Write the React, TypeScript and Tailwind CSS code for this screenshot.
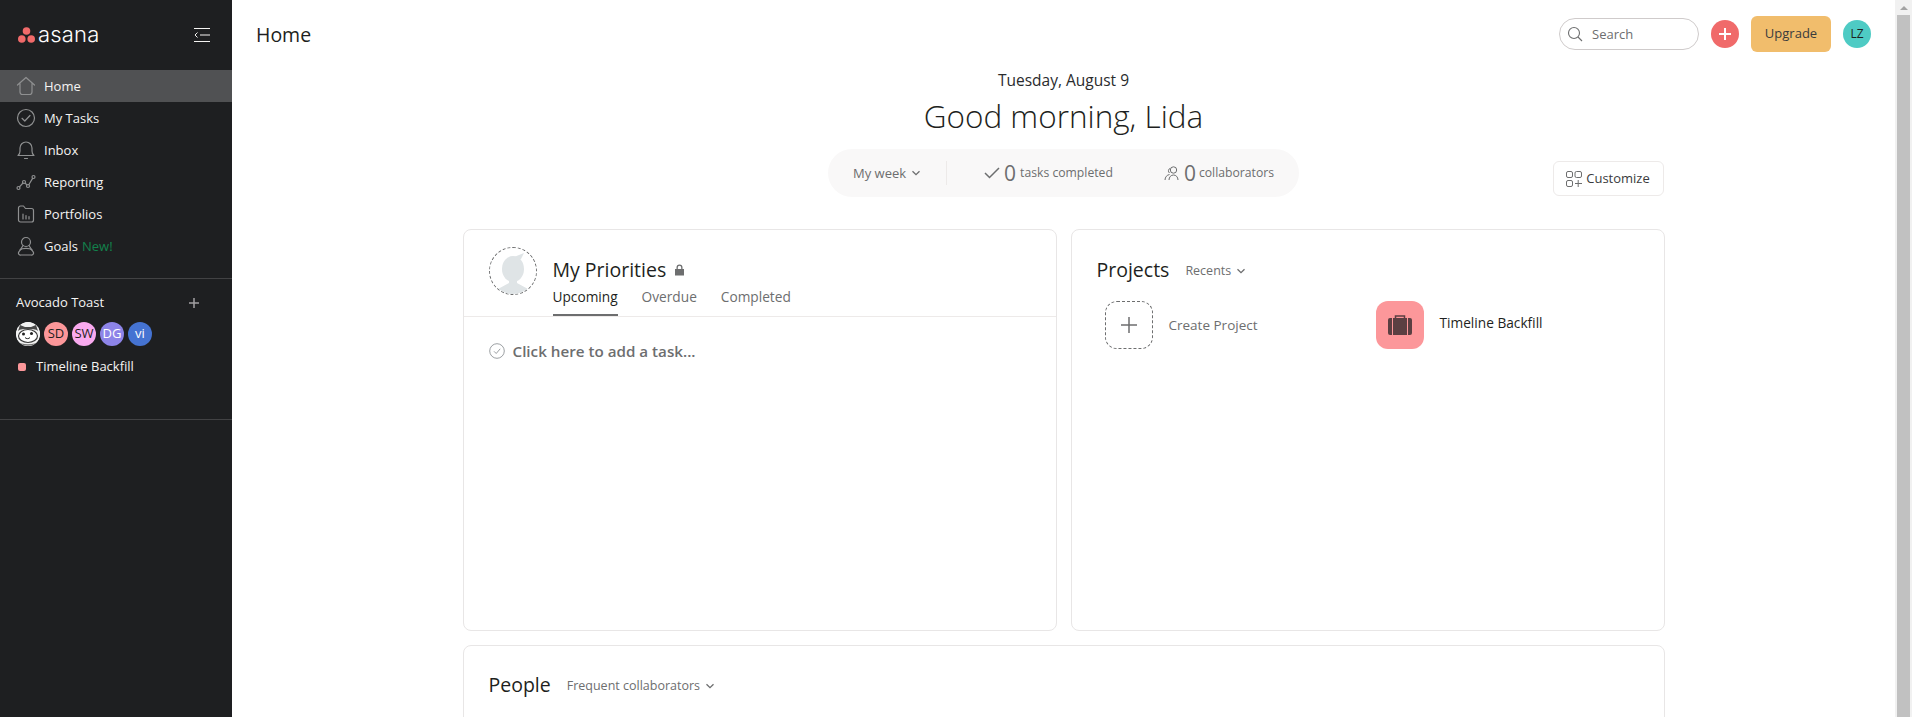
import React from "react";

const font = { fontFamily: '"Open Sans", "Noto Sans", sans-serif' };

function NavIcon({ name }: { name: string }) {
  const c = { fill: "none", stroke: "#8f9091", strokeWidth: 1.2, strokeLinecap: "round" as const, strokeLinejoin: "round" as const };
  return (
    <svg width="20" height="20" viewBox="0 0 20 20" {...c} className="shrink-0">
      {name === "Home" && <path d="M1.500 9 10 1.500 18.500 9M4 7.500v8.500a2.500 2.500 0 0 0 2.500 2.500h7a2.500 2.500 0 0 0 2.500-2.500V7.500" />}
      {name === "My Tasks" && (<><circle cx="10" cy="10" r="8.500" /><path d="M6 10.300l2.800 2.700L14 7.500" /></>)}
      {name === "Inbox" && <path d="M2 15.500c1.500-1 2-2.500 2-4.500V8a6 6 0 0 1 12 0v3c0 2 .5 3.500 2 4.500ZM8.500 18.500h3" />}
      {name === "Reporting" && (<><circle cx="2.500" cy="16" r="1.500" /><circle cx="8" cy="10" r="1.500" /><circle cx="12" cy="14" r="1.500" /><circle cx="17.500" cy="5" r="1.500" /><path d="M3.500 14.800 7 11M9 11.300l2 1.500M12.800 12.700l3.800-6.300" /></>)}
      {name === "Portfolios" && (<><path d="M2.500 4a2 2 0 0 1 2-2h3l2 2.500h6a2 2 0 0 1 2 2v9.500a2 2 0 0 1-2 2h-11a2 2 0 0 1-2-2Z" /><path d="M7 10v5M10 11.500v3.500M13 12.500V15" strokeWidth="1.200" /></>)}
      {name === "Goals" && (<><circle cx="10" cy="6" r="4.500" /><path d="M7 9.500 3.200 15.500a2 2 0 0 0 1.700 3.500h10.200a2 2 0 0 0 1.700-3.500L13 9.500" /><path d="M4 14c2-2.200 10-2.200 12 0" /></>)}
    </svg>
  );
}

const nav = ["Home", "My Tasks", "Inbox", "Reporting", "Portfolios", "Goals"];

function Chevron({ className = "" }: { className?: string }) {
  return (
    <svg width="10" height="10" viewBox="0 0 10 10" fill="none" stroke="currentColor" strokeWidth="1.300" className={className}>
      <path d="M1.500 3.200 5 6.700l3.500-3.500" />
    </svg>
  );
}

function Sidebar() {
  return (
    <aside className="w-[232px] shrink-0 h-full bg-[#1e1f21] text-[#f5f4f3] flex flex-col">
      <div className="h-[70px] flex items-center justify-between pl-[18px] pr-[22px] shrink-0">
        <div className="flex items-center gap-[3px]">
          <svg width="17" height="16" viewBox="0 0 17 16" fill="#f06a6a">
            <circle cx="8.500" cy="4" r="3.800" />
            <circle cx="3.800" cy="12" r="3.800" />
            <circle cx="13.200" cy="12" r="3.800" />
          </svg>
          <span style={{ fontFamily: "Inter, sans-serif" }} className="text-[22px] leading-none font-light text-white -mt-[3px] tracking-[0.2px]">asana</span>
        </div>
        <svg width="16" height="14" viewBox="0 0 16 14" fill="none" stroke="#f5f4f3" strokeWidth="1">
          <path d="M0 .5h16M6 7h10M0 13.500h16M3.500 4.500 1 7l2.500 2.500" />
        </svg>
      </div>
      <nav className="flex flex-col">
        {nav.map((n, i) => (
          <div key={n} className={`h-[32px] flex items-center pl-[16px] gap-[8px] text-[13px] ${i === 0 ? "bg-[#505153]" : ""}`}>
            <NavIcon name={n} />
            <span className="mt-[1px]">{n}</span>
            {n === "Goals" && <span className="text-[#12824c] -ml-[4px] mt-[1px]">New!</span>}
          </div>
        ))}
      </nav>
      <div className="mt-[16px] border-t border-[#424244]" />
      <div className="pl-[16px] pr-[32px] pt-[11px] flex items-center justify-between text-[13px] h-[36px]">
        <span>Avocado Toast</span>
        <svg width="12" height="12" viewBox="0 0 12 12" stroke="#a2a0a2" strokeWidth="1.500"><path d="M6 1v10M1 6h10" /></svg>
      </div>
      <div className="flex gap-[4px] pl-[16px] pt-[7px] text-[13px]">
        <div className="w-[24px] h-[24px] rounded-full bg-white overflow-hidden">
          <svg width="24" height="24" viewBox="0 0 24 24">
            <circle cx="12" cy="12" r="12" fill="#f2f2f2" />
            <path d="M2 9 4 3l5 2h6l5-2 2 6c-2-2-6-2-10-2S4 7 2 9Z" fill="#4a4a4a" />
            <ellipse cx="12" cy="14" rx="9.500" ry="6.500" fill="#fff" stroke="#3a3a3a" strokeWidth="1.200" />
            <circle cx="7.500" cy="12" r="1.500" fill="#222" />
            <circle cx="15.500" cy="11.500" r="1.500" fill="#222" />
            <path d="M9 15.500c1 1.500 4 1.500 5 0" stroke="#222" fill="none" />
            <path d="M1 20c4 4 18 4 22 0" stroke="#777" strokeWidth="1.500" fill="none" />
          </svg>
        </div>
        <div className="w-[24px] h-[24px] rounded-full bg-[#fc979a] text-[#1e1f21] flex items-center justify-center">SD</div>
        <div className="w-[24px] h-[24px] rounded-full bg-[#f9aaef] text-[#1e1f21] flex items-center justify-center">SW</div>
        <div className="w-[24px] h-[24px] rounded-full bg-[#8d84e8] text-white flex items-center justify-center">DG</div>
        <div className="w-[24px] h-[24px] rounded-full bg-[#4573d2] text-white flex items-center justify-center">vi</div>
      </div>
      <div className="flex items-center pl-[18px] gap-[10px] text-[13px] h-[32px] mt-[5px]">
        <span className="w-[8px] h-[8px] rounded-[2px] bg-[#fc979a]" />
        <span>Timeline Backfill</span>
      </div>
      <div className="mt-[36px] border-t border-[#424244]" />
    </aside>
  );
}

function TopBar() {
  return (
    <header className="h-[72px] shrink-0 flex items-center justify-between pl-[24px] pr-[24px]">
      <h1 className="text-[19.500px] leading-none text-[#1e1f21] -mt-[2px]">Home</h1>
      <div className="flex items-center -mt-[4px]">
        <div className="w-[140px] h-[32px] rounded-full border border-[#cfcbcb] flex items-center pl-[7px] gap-[9px]">
          <svg width="16" height="16" viewBox="0 0 16 16" fill="none" stroke="#6d6e6f" strokeWidth="1.100">
            <circle cx="7" cy="7" r="5.500" /><path d="m11 11 4 4" />
          </svg>
          <span className="text-[13px] text-[#6d6e6f] mt-[1px]">Search</span>
        </div>
        <div className="w-[28px] h-[28px] rounded-full bg-[#f06a6a] ml-[12px] flex items-center justify-center">
          <svg width="12" height="12" viewBox="0 0 12 12" stroke="#fff" strokeWidth="2"><path d="M6 0v12M0 6h12" /></svg>
        </div>
        <div className="w-[80px] h-[36px] rounded-[6px] bg-[#f1bd6c] ml-[12px] flex items-center justify-center text-[13px] text-[#3a3b3d]">Upgrade</div>
        <div className="w-[28px] h-[28px] rounded-full bg-[#4ecbc4] ml-[12px] flex items-center justify-center text-[12px] text-[#1e1f21]">LZ</div>
      </div>
    </header>
  );
}

function Stats() {
  return (
    <div className="relative w-[1202px] mx-auto h-[48px] flex justify-center mt-[18px]">
      <div className="w-[471px] h-[48px] rounded-full bg-[#f9f8f8] flex items-center pl-[25px] text-[13px] text-[#6d6e6f]">
        <span className="mt-[1px]">My week</span>
        <Chevron className="ml-[5px]" />
        <span className="w-px h-[24px] bg-[#edeae9] ml-[25px]" />
        <svg width="16" height="14" viewBox="0 0 16 14" fill="none" stroke="#6d6e6f" strokeWidth="1.500" className="ml-[37px]"><path d="m1 7 4.500 4.500L15 2" /></svg>
        <span className="text-[21px] font-medium leading-none ml-[4px]">0</span>
        <span className="text-[12.200px] ml-[4px]">tasks completed</span>
        <svg width="17" height="15" viewBox="0 0 17 15" fill="none" stroke="#6d6e6f" strokeWidth="1" className="ml-[51px]">
          <circle cx="9.500" cy="4" r="3.200" /><path d="M1 14c0-3 2-5 4.500-5.500M6 2.500C4 3 4 6 5.500 7M5 14c0-3 2-5 4.500-5s4.500 2 4.500 5" />
        </svg>
        <span className="text-[21px] font-medium leading-none ml-[3px]">0</span>
        <span className="text-[12.200px] ml-[3px]">collaborators</span>
      </div>
      <div className="absolute right-[1px] top-[12px] w-[111px] h-[35px] rounded-[6px] border border-[#edeae9] flex items-center justify-center gap-[4px] text-[13px] text-[#3a3b3d]">
        <svg width="16" height="16" viewBox="0 0 16 16" fill="none" stroke="#6d6e6f" strokeWidth="1">
          <rect x=".5" y=".5" width="6" height="6" rx="1.500" /><rect x="9" y=".5" width="6.500" height="6" rx="1.500" /><rect x=".5" y="9.500" width="6" height="6" rx="1.500" /><path d="M12.200 9v7M9 12.500h7" />
        </svg>
        Customize
      </div>
    </div>
  );
}

function Priorities() {
  return (
    <section className="w-[594px] shrink-0 h-[402px] rounded-[8px] border border-[#e8e6e6] flex flex-col">
      <div className="h-[87px] border-b border-[#edeae9] flex pl-[25px]">
        <div className="w-[48px] h-[48px] mt-[17px] rounded-full border border-dashed border-[#6d6e6f] overflow-hidden shrink-0">
          <svg width="46" height="46" viewBox="0 0 46 46" fill="#dfe4e6">
            <ellipse cx="23" cy="21" rx="11" ry="13" />
            <path d="M16 12 24 9l10-4-3 6-8 5Z" />
            <path d="M19 30h8v5l11 6v5H8v-5l11-6Z" />
          </svg>
        </div>
        <div className="ml-[16px] flex flex-col">
          <div className="flex items-center mt-[26px] h-[28px] gap-[8px]">
            <span className="text-[19.500px] leading-none text-[#1e1f21]">My Priorities</span>
            <svg width="11" height="12" viewBox="0 0 11 12" fill="#6d6e6f"><path d="M1 5h1.500V3.500a3 3 0 0 1 6 0V5H10v6.500H1Zm2.800 0h3.400V3.500a1.700 1.700 0 0 0-3.400 0Z" /></svg>
          </div>
          <div className="flex gap-[24px] mt-[1px] text-[13.700px] text-[#6d6e6f]">
            <div className="h-[32px] flex items-center pb-[4px] border-b-2 border-[#6d6e6f] text-[#1e1f21]">Upcoming</div>
            <div className="h-[32px] flex items-center pb-[6px]">Overdue</div>
            <div className="h-[32px] flex items-center pb-[6px]">Completed</div>
          </div>
        </div>
      </div>
      <div className="flex items-center pl-[25px] gap-[8px] mt-[23px]">
        <svg width="16" height="16" viewBox="0 0 16 16" fill="none" stroke="#9ca0a3" strokeWidth="1">
          <circle cx="8" cy="8" r="7.300" /><path d="m5 8.300 2.200 2.200L11.200 5.800" />
        </svg>
        <span className="text-[15.200px] font-semibold text-[#6d6e6f]">Click here to add a task...</span>
      </div>
    </section>
  );
}

function Projects() {
  return (
    <section className="w-[594px] shrink-0 h-[402px] rounded-[8px] border border-[#e8e6e6] pl-[25px]">
      <div className="flex items-center mt-[26px] h-[28px] gap-[16px]">
        <span className="text-[19.500px] leading-none text-[#1e1f21]">Projects</span>
        <span className="flex items-center gap-[5px] text-[12.500px] text-[#6d6e6f] mt-[2px]">Recents <Chevron /></span>
      </div>
      <div className="flex mt-[17px] pl-[8px]">
        <div className="w-[271px] flex items-center">
          <div className="w-[48px] h-[48px] rounded-[12px] border border-dashed border-[#6d6e6f] flex items-center justify-center">
            <svg width="16" height="16" viewBox="0 0 16 16" stroke="#6d6e6f" strokeWidth="1.500"><path d="M8 0v16M0 8h16" /></svg>
          </div>
          <span className="ml-[16px] text-[13.500px] font-medium text-[#6d6e6f] mt-[1px]">Create Project</span>
        </div>
        <div className="flex items-center">
          <div className="w-[48px] h-[48px] rounded-[12px] bg-[#fc979a] flex items-center justify-center">
            <svg width="24" height="20" viewBox="0 0 24 20">
              <path d="M7.500 3V1h9v2" fill="none" stroke="#5a3f42" strokeWidth="1.500" />
              <rect y="3" width="24" height="17" rx="2" fill="#5a3f42" />
              <path d="M4.500 3v17M19.500 3v17" stroke="#fc979a" strokeWidth="1" />
            </svg>
          </div>
          <span className="ml-[16px] text-[13.700px] font-medium text-[#1e1f21] -mt-[3px]">Timeline Backfill</span>
        </div>
      </div>
    </section>
  );
}

function People() {
  return (
    <section className="w-[1202px] mx-auto mt-[14px] h-[200px] rounded-[8px] border border-[#e8e6e6] pl-[25px] pt-[25px] shrink-0">
      <div className="flex items-center h-[28px] gap-[16px]">
        <span className="text-[19.500px] leading-none text-[#1e1f21]">People</span>
        <span className="flex items-center gap-[5px] text-[12.500px] text-[#6d6e6f] mt-[2px]">Frequent collaborators <Chevron /></span>
      </div>
    </section>
  );
}

function Scrollbar() {
  return (
    <div className="w-[17px] shrink-0 h-full bg-[#f1f1f1] flex flex-col items-center">
      <div className="h-[15px] w-full flex items-center justify-center">
        <span className="w-0 h-0 border-x-[4px] border-x-transparent border-b-[4px] border-b-[#a3a3a3]" />
      </div>
      <div className="flex-1 w-[13px] bg-[#c1c1c1]" />
    </div>
  );
}

export default function App() {
  return (
    <div style={font} className="w-[1912px] h-[717px] flex overflow-hidden bg-white">
      <Sidebar />
      <main className="flex-1 h-full overflow-hidden flex flex-col">
        <TopBar />
        <div className="text-center text-[15.500px] leading-none font-medium text-[#2a2b2d] mt-[1px]">Tuesday, August 9</div>
        <div className="text-center text-[31.500px] leading-none font-light text-[#1e1f21] mt-[11px]">Good morning, Lida</div>
        <Stats />
        <div className="w-[1202px] mx-auto flex gap-[14px] mt-[32px] shrink-0">
          <Priorities />
          <Projects />
        </div>
        <People />
      </main>
      <Scrollbar />
    </div>
  );
}
